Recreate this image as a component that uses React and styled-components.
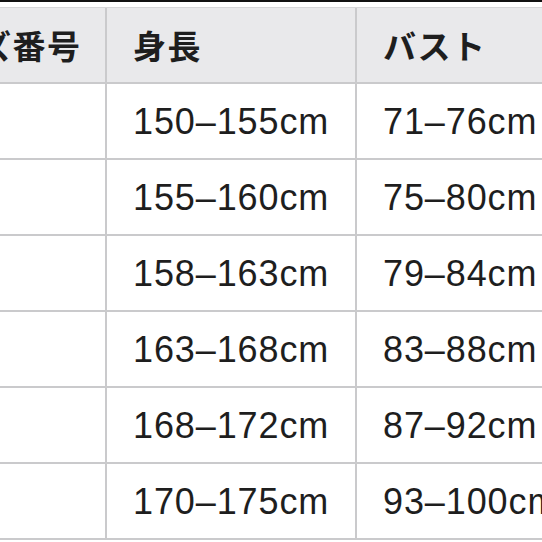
import React from 'react';
import styled, { createGlobalStyle } from 'styled-components';

const GlobalStyle = createGlobalStyle`
    html, body {
        margin: 0;
        padding: 0;
        background: #ffffff;
        overflow: hidden;
    }
    body {
        font-family: 'Liberation Sans', 'Noto Sans CJK JP', sans-serif;
        color: #1d1d1f;
    }
`;

const Frame = styled.div`
    width: 542px;
    height: 542px;
    overflow: hidden;
    border-top: 2px solid #111111;
    box-sizing: border-box;
`;

const Table = styled.div`
    margin-left: -116px;
    margin-top: 5px;
    border-top: 1px solid #d6d6d8;
    display: grid;
    grid-template-columns: 223px 250px 300px;
    width: max-content;
`;

const Row = styled.div`
    display: contents;
`;

const Cell = styled.div`
    display: flex;
    align-items: center;
    padding-left: 26px;
    box-sizing: border-box;
    white-space: nowrap;
    height: 76px;
    background: ${(p) => (p.$head ? '#e9e9eb' : '#ffffff')};
    border-bottom: 2px solid #cacacc;
    border-right: 2px solid #cacacc;
    font-family: ${(p) =>
        p.$head
            ? "'Noto Sans CJK JP', sans-serif"
            : "'Liberation Sans', 'Noto Sans CJK JP', sans-serif"};
    font-size: ${(p) => (p.$head ? '33px' : '36px')};
    font-weight: ${(p) => (p.$head ? 700 : 400)};
    letter-spacing: ${(p) => (p.$head ? '1.5px' : '0.9px')};
    color: #1e1e1e;
    padding-top: ${(p) => (p.$head ? '0' : '1px')};
`;

const rows = [
    ['', '150–155cm', '71–76cm'],
    ['', '155–160cm', '75–80cm'],
    ['', '158–163cm', '79–84cm'],
    ['', '163–168cm', '83–88cm'],
    ['', '168–172cm', '87–92cm'],
    ['', '170–175cm', '93–100cm'],
];

export default function App() {
    return (
        <>
            <GlobalStyle />
            <Frame>
                <Table>
                    <Row>
                        <Cell $head>サイズ番号</Cell>
                        <Cell $head>身長</Cell>
                        <Cell $head>バスト</Cell>
                    </Row>
                    {rows.map((r, i) => (
                        <Row key={i}>
                            {r.map((c, j) => (
                                <Cell key={j}>{c}</Cell>
                            ))}
                        </Row>
                    ))}
                </Table>
            </Frame>
        </>
    );
}
